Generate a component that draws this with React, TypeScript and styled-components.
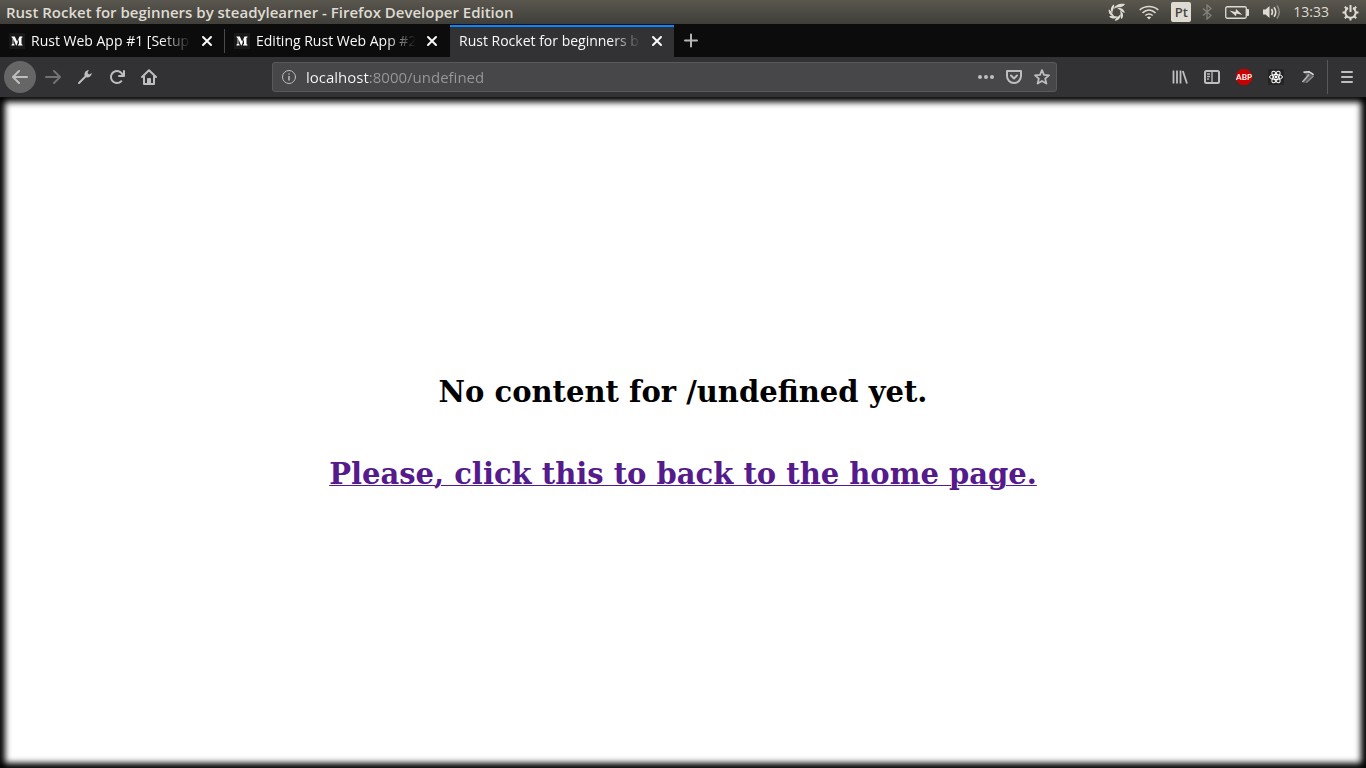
import React from "react";
import styled, { createGlobalStyle } from "styled-components";

const ui = `"Open Sans", "Noto Sans", sans-serif`;

const GlobalStyle = createGlobalStyle`
  * { box-sizing: border-box; }
  body { margin: 0; background: #0c0c0d; }
  button { font: inherit; border: 0; padding: 0; background: none; color: inherit; }
  svg { display: block; flex: none; }
`;

const Desktop = styled.div`
  display: flex;
  flex-direction: column;
  min-height: 100vh;
  font-family: ${ui};
`;

const TitleBar = styled.header`
  display: flex;
  align-items: center;
  justify-content: space-between;
  height: 24px;
  padding-left: 6px;
  background: linear-gradient(#59574e, #3f3e39);
  color: #dfdbd2;
`;

const WindowTitle = styled.h1`
  margin: 0;
  font-size: 15px;
  line-height: 24px;
  font-weight: 600;
  white-space: nowrap;
`;

const Tray = styled.div`
  display: flex;
  align-items: center;
`;

const TrayItem = styled.button<{ $width: number }>`
  display: flex;
  align-items: center;
  justify-content: center;
  width: ${(p) => p.$width}px;
  height: 24px;
`;

const Keyboard = styled.span`
  width: 20px;
  height: 20px;
  border-radius: 2px;
  background: #dfdbd2;
  color: #45443e;
  font-size: 13px;
  font-weight: 600;
  line-height: 20px;
  text-align: center;
`;

const Clock = styled.time`
  margin: 0 5px 0 6px;
  font-size: 14px;
  line-height: 24px;
`;

const TabStrip = styled.div`
  display: flex;
  height: 33px;
  padding-top: 1px;
  background: #0c0c0d;
  color: #f9f9fa;
`;

const Tab = styled.div<{ $active?: boolean; $divider?: boolean }>`
  position: relative;
  display: flex;
  align-items: center;
  gap: 6px;
  width: 224px;
  margin-right: 1px;
  padding: 0 9px 2px;
  background: ${(p) => (p.$active ? "#323234" : "transparent")};
  border-top: 2px solid ${(p) => (p.$active ? "#0a84ff" : "transparent")};
  ${(p) => p.$divider && `
    &::after {
      content: "";
      position: absolute;
      right: -1px;
      top: 2px;
      bottom: 4px;
      width: 1px;
      background: #4b4b4c;
    }
  `}
`;

const TabLabel = styled.span`
  flex: 1;
  min-width: 0;
  overflow: hidden;
  white-space: nowrap;
  font-size: 14px;
  line-height: 24px;
  mask-image: linear-gradient(to left, transparent 2px, #000 32px);
`;

const CloseButton = styled.button`
  display: flex;
  align-items: center;
  justify-content: center;
  width: 16px;
  height: 28px;
`;

const NewTab = styled.button`
  display: flex;
  align-items: center;
  justify-content: center;
  width: 32px;
  color: #b6b6b7;
`;

const NavBar = styled.nav`
  display: flex;
  align-items: center;
  height: 40px;
  padding: 0 3px 0 4px;
  background: #323234;
  color: #bebebf;
`;

const NavButton = styled.button<{ $round?: boolean; $dim?: boolean }>`
  display: flex;
  align-items: center;
  justify-content: center;
  width: 32px;
  height: 32px;
  border-radius: 50%;
  background: ${(p) => (p.$round ? "#666667" : "transparent")};
  margin-right: ${(p) => (p.$round ? 1 : 0)}px;
  color: ${(p) => (p.$dim ? "#727273" : "inherit")};
`;

const Spacer = styled.div`
  flex: 1 1 0;
`;

const Divider = styled.div`
  width: 1px;
  height: 34px;
  margin: 0 3px;
  background: #58585a;
`;

const UrlBar = styled.div`
  display: flex;
  align-items: center;
  gap: 12px;
  flex: 0 1 785px;
  height: 30px;
  padding: 0 6px 0 8px;
  background: #474749;
  border: 1px solid #59595b;
  border-radius: 3px;
`;

const UrlInput = styled.input`
  flex: 1;
  min-width: 0;
  margin-left: -3px;
  padding: 0;
  border: 0;
  outline: 0;
  height: 28px;
  font-family: ${ui};
  font-size: 15px;
  background: linear-gradient(to right, #f9f9fa 63px, #98989a 63px);
  background-clip: text;
  -webkit-text-fill-color: transparent;
`;

const UrlButton = styled.button`
  display: flex;
`;

const Page = styled.main`
  flex: 1;
  display: flex;
  flex-direction: column;
  align-items: center;
  justify-content: center;
  gap: 48px;
  background: #fff;
  box-shadow: inset 0 0 6px 5px #000;
  font-family: "DejaVu Serif", serif;
`;

const Message = styled.h2`
  margin: 0;
  font-size: 29px;
  line-height: 34px;
  font-weight: 700;
  text-align: center;
  color: #000;
`;

const HomeLink = styled.a`
  color: #551a8b;
  text-decoration-thickness: 1px;
`;

const Icon = ({ children, size = 16 }: { children: React.ReactNode; size?: number }) => (
  <svg width={size} height={size} viewBox="0 0 16 16" fill="none" stroke="currentColor" strokeWidth="2" strokeLinecap="round" strokeLinejoin="round" aria-hidden="true">
    {children}
  </svg>
);

const MediumLogo = () => (
  <svg width="16" height="16" viewBox="0 0 16 16" aria-hidden="true">
    <rect width="16" height="16" fill="#191919" />
    <path fill="#fff" d="M2.500 3.500h3.300l2.400 5.300 2.300-5.300h3v.7l-1 .7v6.200l1 .7v.7H9v-.7l1-.7V6l-2.500 6.500h-.4L4.400 6v4.500l1.200 1.300v.7H2.500v-.7l1.100-1.300V5L2.500 4.200z" />
  </svg>
);

const BrowserTab = ({ title, logo, active, divider }: { title: string; logo?: boolean; active?: boolean; divider?: boolean }) => (
  <Tab $active={active} $divider={divider}>
    {logo && <MediumLogo />}
    <TabLabel>{title}</TabLabel>
    <CloseButton aria-label="Close tab">
      <Icon><path d="M4 4l8 8M12 4l-8 8" /></Icon>
    </CloseButton>
  </Tab>
);

const SystemTray = () => (
  <Tray>
    <TrayItem $width={32} aria-label="Activity">
      <svg width="18" height="18" viewBox="0 0 18 18" fill="currentColor" aria-hidden="true">
        <path d="M6 6C6.500 2.500 11 .3 17 1c-1 2.500-4 3.300-6.500 3.300C8.500 4.300 7 5 6 6z" />
        {[55, 105, 155, 205, 255, 305].map((angle) => (
          <path key={angle} d="M5.500 6.500C6.500 3 10 1.300 13.500 2.800c-1 2-4 1.700-8 3.700z" transform={`rotate(${angle} 8.500 9.500)`} />
        ))}
      </svg>
    </TrayItem>
    <TrayItem $width={32} aria-label="Wi-Fi">
      <svg width="20" height="16" viewBox="0 0 20 16" fill="none" stroke="currentColor" strokeWidth="1.600" aria-hidden="true">
        <path d="M.7 6C6 1.300 14 1.300 19.300 6M3.500 8.800c4-3.400 9-3.400 13 0M6.300 11.500c2.400-2 5-2 7.400 0" />
        <path d="M10 15.500l-2.200-2.300q2.200-1.600 4.400 0z" fill="currentColor" stroke="none" />
      </svg>
    </TrayItem>
    <TrayItem $width={32} aria-label="Keyboard layout"><Keyboard>Pt</Keyboard></TrayItem>
    <TrayItem $width={20} aria-label="Bluetooth">
      <svg width="10" height="16" viewBox="0 0 10 16" fill="none" stroke="#85837b" strokeWidth="1.300" aria-hidden="true">
        <path d="M1 4.500l8 7-4 3.500V1l4 3.500-8 7" />
      </svg>
    </TrayItem>
    <TrayItem $width={40} aria-label="Battery">
      <svg width="24" height="13" viewBox="0 0 24 13" aria-hidden="true">
        <rect x=".75" y=".75" width="20.500" height="11.500" rx="1.500" fill="none" stroke="currentColor" strokeWidth="1.300" />
        <path d="M21.500 3H23q1 0 1 1v5q0 1-1 1h-1.500z" fill="currentColor" />
        <path d="M4.500 4.500L10.500 6 11 3l6.500 6-6-1.500-.5 2.800z" fill="currentColor" />
      </svg>
    </TrayItem>
    <TrayItem $width={30} aria-label="Volume">
      <svg width="20" height="16" viewBox="0 0 20 16" fill="none" stroke="currentColor" strokeWidth="1.600" aria-hidden="true">
        <path d="M1 5.500h2.500L7.500 2v12l-4-3.500H1z" fill="currentColor" stroke="none" />
        <path d="M9.500 5q2 3 0 6M12 3.200q3.500 4.800 0 9.600" />
        <path d="M15 1.500q4.500 6.500 0 13" stroke="#8b8981" />
      </svg>
    </TrayItem>
    <Clock>13:33</Clock>
    <TrayItem $width={32} aria-label="Session">
      <svg width="17" height="17" viewBox="0 0 17 17" fill="none" stroke="currentColor" strokeWidth="2" aria-hidden="true">
        <path d="M6 4a5.200 5.200 0 1 0 5 0M8.500 1v7" />
        <path d="M.5 8.500h3M13.500 8.500h3M8.500 13.500v3M2.800 2.800l2 2M14.200 2.800l-2 2M2.800 14.200l2-2M14.200 14.200l-2-2" />
      </svg>
    </TrayItem>
  </Tray>
);

export default function App() {
  return (
    <Desktop>
      <GlobalStyle />
      <TitleBar>
        <WindowTitle>Rust Rocket for beginners by steadylearner - Firefox Developer Edition</WindowTitle>
        <SystemTray />
      </TitleBar>
      <TabStrip>
        <BrowserTab logo divider title="Rust Web App #1 [Setup" />
        <BrowserTab logo title="Editing Rust Web App #2" />
        <BrowserTab active title="Rust Rocket for beginners b" />
        <NewTab aria-label="New tab">
          <Icon><path d="M8 1.500v12M2 7.500h12" /></Icon>
        </NewTab>
      </TabStrip>
      <NavBar>
        <NavButton $round aria-label="Back"><Icon><path d="M15 8H1.500M7 2L1 8l6 6" /></Icon></NavButton>
        <NavButton $dim aria-label="Forward"><Icon><path d="M1 8h13.500M9 2l6 6-6 6" /></Icon></NavButton>
        <NavButton aria-label="Developer tools">
          <Icon>
            <path d="M2 14l7-7" />
            <path d="M11.800 1C8.500 1.500 6.900 4 7.700 7c1 2.500 6.300 2 7.300-3l-3 1.500-1.500-1.500z" fill="currentColor" stroke="none" />
          </Icon>
        </NavButton>
        <NavButton aria-label="Reload">
          <Icon>
            <path d="M15 1a1 1 0 0 0-1 1v2.418A6.995 6.995 0 1 0 8 15a6.954 6.954 0 0 0 4.950-2.050 1 1 0 0 0-1.414-1.414A5.019 5.019 0 1 1 12.549 6H10a1 1 0 0 0 0 2h5a1 1 0 0 0 1-1V2a1 1 0 0 0-1-1z" fill="currentColor" stroke="none" />
          </Icon>
        </NavButton>
        <NavButton aria-label="Home">
          <Icon><path d="M1 8l7-6.800L15 8M3 7.500V15h10V7.500M7 14v-4h2v4" /></Icon>
        </NavButton>
        <Spacer />
        <UrlBar>
          <Icon>
            <circle cx="8" cy="8" r="6.500" strokeWidth="1" />
            <path d="M8 7.500v3.500M8 5v.1" strokeWidth="1.500" />
          </Icon>
          <UrlInput aria-label="Address" defaultValue="localhost:8000/undefined" />
          <UrlButton aria-label="Page actions">
            <Icon><g fill="currentColor" stroke="none"><circle cx="2" cy="8" r="2" /><circle cx="8" cy="8" r="2" /><circle cx="14" cy="8" r="2" /></g></Icon>
          </UrlButton>
          <UrlButton aria-label="Save to Pocket">
            <Icon><path d="M1 2h14v5a7 7 0 0 1-14 0zM5 6.500l3 3 3-3" /></Icon>
          </UrlButton>
          <UrlButton aria-label="Bookmark">
            <Icon><path d="M8 1.200l2 4.600 5 .5-3.800 3.300 1.200 5L8 12l-4.400 2.600 1.200-5L1 6.300l5-.5z" strokeWidth="1.800" /></Icon>
          </UrlButton>
        </UrlBar>
        <Spacer />
        <NavButton aria-label="Library">
          <Icon><path d="M1.500 1.500v13M5 1.500v13M8.500 1.500v13M10.800 2L15 14.500" strokeWidth="1.800" strokeLinecap="butt" /></Icon>
        </NavButton>
        <NavButton aria-label="Sidebar">
          <Icon><rect x="1" y="2" width="14" height="12" rx="1.500" /><path d="M8 2v12M3.500 5h2M3.500 7.500h2M3.500 10h1" strokeWidth="1.300" /></Icon>
        </NavButton>
        <NavButton aria-label="Adblock Plus">
          <svg width="16" height="16" viewBox="0 0 16 16" aria-hidden="true">
            <path fill="#c80000" d="M4.700 0h6.600L16 4.700v6.600L11.300 16H4.700L0 11.300V4.700z" />
            <text x="8" y="11" textAnchor="middle" fill="#fff" fontSize="8" fontWeight="700" fontFamily="Lato, sans-serif">ABP</text>
          </svg>
        </NavButton>
        <NavButton aria-label="React Developer Tools">
          <svg width="16" height="16" viewBox="0 0 16 16" fill="none" stroke="#fff" aria-hidden="true">
            <rect width="16" height="16" fill="#242424" stroke="none" />
            <circle cx="8" cy="8" r="1.400" fill="#fff" stroke="none" />
            <ellipse cx="8" cy="8" rx="6.500" ry="2.500" />
            <ellipse cx="8" cy="8" rx="6.500" ry="2.500" transform="rotate(60 8 8)" />
            <ellipse cx="8" cy="8" rx="6.500" ry="2.500" transform="rotate(120 8 8)" />
          </svg>
        </NavButton>
        <NavButton aria-label="Extension">
          <svg width="16" height="16" viewBox="0 0 16 16" aria-hidden="true">
            <path d="M3 2.500l6-.5 5 3.500-1 3L6 14l-3-.5 4-6z" fill="#5c5c5e" />
            <path d="M2.500 13L9 5.500" stroke="#b5b5b5" strokeWidth="1.600" />
            <path d="M6.500 13.500L13.500 7" stroke="#8c8c8c" strokeWidth="1.200" />
            <path d="M3.500 3.200L9 2.700l4.500 3" stroke="#e0e0e0" strokeWidth="1.600" fill="none" />
          </svg>
        </NavButton>
        <Divider />
        <NavButton aria-label="Menu">
          <Icon><path d="M3 3h10M3 8h10M3 13h10" /></Icon>
        </NavButton>
      </NavBar>
      <Page>
        <Message>No content for /undefined yet.</Message>
        <Message><HomeLink href="/">Please, click this to back to the home page.</HomeLink></Message>
      </Page>
    </Desktop>
  );
}
